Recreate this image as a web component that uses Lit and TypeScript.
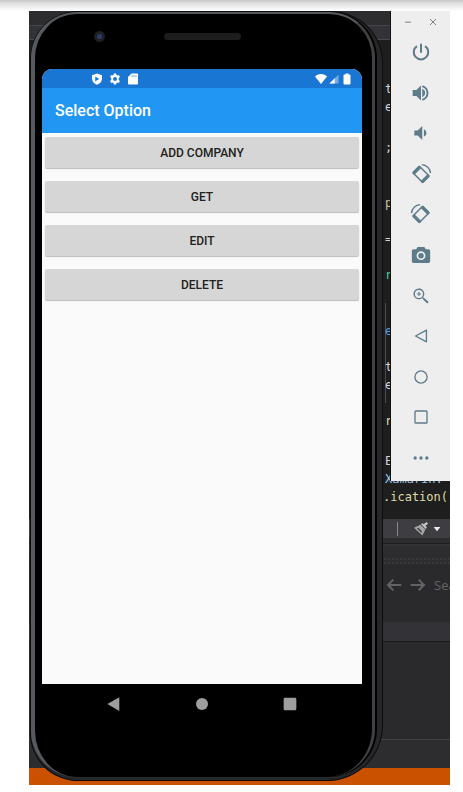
import { LitElement, html, css, svg } from "lit";
import { customElement, property } from "lit/decorators.js";

const ICONS: Record<string, unknown> = {
  power: svg`<path d="M10.800 2h2.400v11h-2.400z"/><path d="M17.600 4l-1.500 1.900A7.500 7.500 0 1 1 7.900 5.900L6.400 4A9.900 9.900 0 1 0 17.600 4z"/>`,
  louder: svg`<path d="M2 8.500v7h4.500L12 21V3L6.500 8.500zM13.500 7v10c2-.8 3.500-2.700 3.500-5s-1.500-4.200-3.500-5z"/><path d="M13.500 2.800v2.300a7.200 7.200 0 0 1 0 13.800v2.300a9.400 9.400 0 0 0 0-18.400z"/>`,
  quieter: svg`<path d="M4 9v6h4l5.500 5.500v-17L8 9zM15.500 7.500v9c1.800-.8 3-2.500 3-4.500s-1.200-3.700-3-4.500z"/>`,
  rotate: svg`<g transform="rotate(-45 12 12.500)"><rect x="6.500" y="4.500" width="11" height="16" rx="1" fill="none" stroke="currentColor" stroke-width="1.800"/><rect x="5.600" y="3.200" width="12.800" height="4" rx="1.500"/><rect x="5.600" y="17.800" width="12.800" height="4" rx="1.500"/></g><path d="M13 .8A11 11 0 0 1 23.400 11" fill="none" stroke="currentColor" stroke-width="1.600"/>`,
  camera: svg`<path fill-rule="evenodd" d="M8 2.500L6.200 5H3a2 2 0 0 0-2 2v12.500a2 2 0 0 0 2 2h18a2 2 0 0 0 2-2V7a2 2 0 0 0-2-2h-3.200L16 2.500zM12 7.500a5.300 5.300 0 1 1 0 10.600 5.300 5.300 0 0 1 0-10.600z"/><circle cx="12" cy="12.800" r="3.300"/>`,
  zoom: svg`<path fill-rule="evenodd" d="M15.500 14h-.8l-.3-.3a6.500 6.500 0 1 0-.7.700l.3.300v.8l5.500 5.500 1.800-1.800zM9.500 4.700a4.800 4.800 0 1 1 0 9.600 4.800 4.800 0 0 1 0-9.600z"/><path d="M8.900 7h1.300v1.900H12v1.300h-1.800V12H8.900v-1.800H7V8.900h1.900z"/>`,
  back: svg`<path fill="none" stroke="currentColor" stroke-width="1.600" stroke-linejoin="round" d="M18.500 5v14L5.500 12z"/>`,
  home: svg`<circle cx="12" cy="12" r="7.300" fill="none" stroke="currentColor" stroke-width="1.600"/>`,
  overview: svg`<rect x="4.800" y="4.800" width="14.400" height="14.400" rx="1" fill="none" stroke="currentColor" stroke-width="1.600"/>`,
  more: svg`<circle cx="5" cy="12" r="2"/><circle cx="12" cy="12" r="2"/><circle cx="19" cy="12" r="2"/>`,
  minimize: svg`<path d="M3 11h18v3H3z"/>`,
  close: svg`<path fill="none" stroke="currentColor" stroke-width="3" d="M3 3l18 18M21 3L3 21"/>`,
  shield: svg`<path fill-rule="evenodd" d="M12 1L2 4.500V11c0 6 4.200 10.500 10 12.500 5.800-2 10-6.500 10-12.500V4.500zM8.500 7l8 4.800-8 4.800z"/>`,
  gear: svg`<path fill-rule="evenodd" d="M9.700 1h4.600l.6 3 1.700 1 3-1 2.300 4-2.400 2.100v3.800l2.400 2.100-2.300 4-3-1-1.700 1-.6 3H9.700l-.6-3-1.700-1-3 1-2.300-4 2.400-2.100v-3.800L2.100 8l2.300-4 3 1 1.700-1zM12 8a4 4 0 1 0 0 8 4 4 0 0 0 0-8z"/>`,
  card: svg`<path d="M9 1h11a2 2 0 0 1 2 2v18a2 2 0 0 1-2 2H4a2 2 0 0 1-2-2V8z"/><path fill="#1976d2" opacity=".6" d="M9 4h2v4H9zM13 4h2v4h-2zM17 4h2v4h-2z"/>`,
  wifi: svg`<path d="M12 22L0 7C3 4 7 2 12 2s9 2 12 5z"/>`,
  signal: svg`<path opacity=".4" d="M1 23L23 1v22z"/><path d="M1 23L14 10v13z"/>`,
  battery: svg`<path d="M9 1h6v2h2a2 2 0 0 1 2 2v16a2 2 0 0 1-2 2H7a2 2 0 0 1-2-2V5a2 2 0 0 1 2-2h2z"/>`,
  navBack: svg`<path d="M20 2v20.500L2 12z"/>`,
  navHome: svg`<circle cx="12" cy="12" r="9"/>`,
  navRecent: svg`<rect x="2.500" y="2.500" width="19" height="19" rx="2"/>`,
  arrowLeft: svg`<path fill="none" stroke="currentColor" stroke-width="3" d="M23 12H3M11 4l-8 8 8 8"/>`,
  arrowRight: svg`<path fill="none" stroke="currentColor" stroke-width="3" d="M1 12h20M13 4l8 8-8 8"/>`,
  broom: svg`<path d="M21.500 0L24 2.500 19.500 7l-3-3z"/><path d="M12 3.500l3-1.500 7 7-2 3z"/><path opacity=".75" d="M11 4.500l8.500 8.500-5 10L0 10z"/><path fill="#3e3e42" d="M5 10.500l7.500 8 1-2.500-6-6z"/>`,
  caret: svg`<path d="M2 6h20L12 19z"/>`,
};

@customElement("ui-icon")
class UiIcon extends LitElement {
  @property() name = "";
  @property({ type: Boolean }) flip = false;

  static styles = css`
    :host { display: block; width: 20px; height: 20px; flex: none; }
    .glyph { display: block; width: 100%; height: 100%; fill: currentColor; overflow: visible; }
    .flip { transform: scaleX(-1); }
  `;

  render() {
    return html`<svg class="glyph ${this.flip ? "flip" : ""}" viewBox="0 0 24 24" aria-hidden="true">${ICONS[this.name]}</svg>`;
  }
}

@customElement("emulator-toolbar")
class EmulatorToolbar extends LitElement {
  static styles = css`
    :host { display: flex; flex-direction: column; width: 59px; height: 470px; box-sizing: border-box; padding-bottom: 3px; background: #eee; color: #5d7b89; box-shadow: -1px 0 0 #111; }
    .window { display: flex; height: 21px; justify-content: space-between; padding: 0 13px; align-items: center; color: #7a858b; }
    .tools { display: flex; flex-direction: column; flex: 1; }
    .tool { flex: 1; justify-content: center; width: 100%; }
    button { display: flex; align-items: center; border: 0; padding: 0; background: none; color: inherit; cursor: pointer; }
    .small { width: 8px; height: 8px; }
  `;

  private tools = [
    { icon: "power", label: "Power" },
    { icon: "louder", label: "Volume up" },
    { icon: "quieter", label: "Volume down" },
    { icon: "rotate", label: "Rotate left" },
    { icon: "rotate", label: "Rotate right", flip: true },
    { icon: "camera", label: "Take screenshot" },
    { icon: "zoom", label: "Zoom" },
    { icon: "back", label: "Back" },
    { icon: "home", label: "Home" },
    { icon: "overview", label: "Overview" },
    { icon: "more", label: "More" },
  ];

  render() {
    return html`
      <div class="window">
        <button aria-label="Minimize"><ui-icon class="small" name="minimize"></ui-icon></button>
        <button aria-label="Close"><ui-icon class="small" name="close"></ui-icon></button>
      </div>
      <div class="tools">
        ${this.tools.map((t) => html`<button class="tool" aria-label=${t.label}>
          <ui-icon name=${t.icon} ?flip=${!!t.flip}></ui-icon>
        </button>`)}
      </div>`;
  }
}

@customElement("phone-frame")
class PhoneFrame extends LitElement {
  static styles = css`
    :host { display: flex; box-sizing: border-box; padding: 1px 8px 4px 1px; background: #262728; border-radius: 48px 52px 56px 48px; box-shadow: inset 0 0 0 1px #0c0c0d; font-family: Roboto, sans-serif; }
    .body { flex: 1; min-width: 0; display: flex; flex-direction: column; box-sizing: border-box; padding: 0 10px 0 7px; background: #000; border: solid; border-width: 2px 3px 0 4px; border-color: #55585b #414144 #000 #56595e; border-radius: 46px 46px 48px 46px; box-shadow: 2px 0 0 #000; }
    .top { display: grid; grid-template-columns: 1fr 77px 1fr; height: 55px; padding-bottom: 10px; box-sizing: border-box; align-items: center; }
    .lens { width: 11px; height: 11px; box-sizing: border-box; margin-left: 52px; border-radius: 50%; border: 3px solid #1d1f24; background: #2c3d66; }
    .speaker { height: 7px; border-radius: 4px; background: #1d1d1e; }
    .screen { flex: 1; display: flex; flex-direction: column; background: #fafafa; border-radius: 10px 10px 0 0; overflow: hidden; }
    .status { display: flex; align-items: center; height: 19px; padding: 0 9px 0 49px; gap: 6px; background: #1976d2; color: #fff; }
    .left, .right { display: flex; align-items: center; }
    .left { gap: 6px; flex: 1; }
    .right { gap: 2px; }
    .status ui-icon { width: 12px; height: 12px; }
    .right .signal { width: 10px; height: 10px; }
    .bar { display: flex; align-items: center; height: 45px; padding: 0 13px; background: #2196f3; color: #fff; }
    .title { margin: 0; font-size: 16px; line-height: 20px; font-weight: 500; }
    .options { display: flex; flex-direction: column; gap: 13px; padding: 4px 3px; }
    .option { height: 31px; border: 0; border-radius: 2px; background: #d6d6d6; color: #212121; font: 500 12px/16px Roboto, sans-serif; box-shadow: 0 1px 1px #bbb; cursor: pointer; }
    .nav { display: flex; justify-content: center; align-items: flex-start; gap: 72px; height: 93px; padding-top: 12px; box-sizing: border-box; color: #9e9e9e; }
    .key { border: 0; padding: 0; background: none; color: inherit; cursor: pointer; }
    .key ui-icon { width: 16px; height: 16px; }
  `;

  render() {
    return html`
      <div class="body">
        <div class="top"><span class="lens"></span><span class="speaker"></span></div>
        <main class="screen">
          <div class="status">
            <div class="left"><ui-icon name="shield"></ui-icon><ui-icon name="gear"></ui-icon><ui-icon name="card"></ui-icon></div>
            <div class="right"><ui-icon name="wifi"></ui-icon><ui-icon class="signal" name="signal"></ui-icon><ui-icon name="battery"></ui-icon></div>
          </div>
          <header class="bar"><h1 class="title">Select Option</h1></header>
          <div class="options">
            ${["ADD COMPANY", "GET", "EDIT", "DELETE"].map((o) => html`<button class="option">${o}</button>`)}
          </div>
        </main>
        <nav class="nav">
          <button class="key" aria-label="Back"><ui-icon name="navBack"></ui-icon></button>
          <button class="key" aria-label="Home"><ui-icon name="navHome"></ui-icon></button>
          <button class="key" aria-label="Recent apps"><ui-icon name="navRecent"></ui-icon></button>
        </nav>
      </div>`;
  }
}

@customElement("ide-backdrop")
class IdeBackdrop extends LitElement {
  static styles = css`
    :host { display: flex; flex-direction: column; overflow: hidden; background: #2d2d30; }
    .side { width: 67px; margin-left: auto; box-sizing: border-box; }
    .tabs { height: 39px; background: linear-gradient(#2d2d30 14px, #46464a 14px, #46464a 15px, #333337 15px, #333337 28px, #4a4a4d 28px, #4a4a4d 29px, #1e1e1e 29px); }
    .editor { flex: 1; background: #1e1e1e; }
    .code { padding-top: 30px; background: linear-gradient(#4a4a4a, #4a4a4a) 2px 253px / 1px 100px no-repeat; font: 12px/18px "DejaVu Sans Mono", monospace; color: #d4d4d4; white-space: pre; overflow: hidden; }
    .line { display: flex; align-items: flex-end; padding-left: 2px; }
    .line:last-child { padding-left: 0; }
    .near { height: 18px; }
    .mid { height: 36px; }
    .far { height: 40px; }
    .block { height: 56px; }
    .peach { color: #d7ba9d; }
    .green { color: #4ec9a0; }
    .blue { color: #569cd6; }
    .pale { color: #9cc4e4; }
    .yellow { color: #dcdcaa; }
    .zoombar { height: 19px; background: #3e3e42; }
    .zoombar .side { display: flex; align-items: center; height: 100%; padding-left: 14px; color: #c8c8c8; }
    .rule { width: 1px; height: 14px; background: #8a8a8d; margin-right: 16px; }
    .broom { width: 14px; height: 14px; margin-right: 5px; }
    .caret { width: 8px; height: 8px; color: #eee; }
    .grip { height: 26px; background: linear-gradient(#2d2d30 5px, #1f1f21 5px, #1f1f21 6px, #333337 6px, #333337 8px, #2d2d30 8px); display: flex; align-items: flex-end; }
    .dots { height: 7px; background: radial-gradient(circle, #39393c 1px, transparent 1px) 0 0 / 4px 4px; }
    .find { height: 58px; background: #2a2a2c; }
    .find .side { display: flex; align-items: center; gap: 8px; height: 42px; padding-left: 3px; color: #636366; font: 13px/18px "Open Sans", sans-serif; overflow: hidden; }
    .find ui-icon { width: 16px; height: 16px; }
    .head { height: 19px; background: #333337; border-bottom: 1px solid #18181a; }
    .list { height: 97px; background: #2a2a2c; border-bottom: 1px solid #424245; }
    .foot { height: 28px; background: #2d2d30; }
    .status { height: 17px; background: #ca5100; }
  `;

  private lines: [string, string, string][] = [
    ["near", "", "t"],
    ["near", "", "e"],
    ["far", "", ";"],
    ["block", "peach", "p"],
    ["mid", "", "="],
    ["mid", "green", "r"],
    ["block", "blue", "e"],
    ["mid", "", "t"],
    ["near", "", "e"],
    ["mid", "yellow", "r"],
    ["far", "", "E"],
    ["near", "pale", "Xamarin."],
    ["near", "yellow", ".ication("],
  ];

  render() {
    return html`
      <div class="tabs"></div>
      <div class="editor"><div class="side code">${this.lines.map(
        ([gap, tone, text]) => html`<div class="line ${gap} ${tone}">${text}</div>`
      )}</div></div>
      <div class="zoombar"><div class="side">
        <span class="rule"></span><ui-icon class="broom" name="broom"></ui-icon><ui-icon class="caret" name="caret"></ui-icon>
      </div></div>
      <div class="grip"><div class="side dots"></div></div>
      <div class="find"><div class="side">
        <ui-icon name="arrowLeft"></ui-icon><ui-icon name="arrowRight"></ui-icon><span>Sea</span>
      </div></div>
      <div class="head"></div>
      <div class="list"></div>
      <div class="foot"></div>
      <div class="status"></div>`;
  }
}

@customElement("app-root")
class AppRoot extends LitElement {
  static styles = css`
    :host { display: block; box-sizing: border-box; min-height: 100vh; padding: 11px 13px 7px 29px; background: linear-gradient(#c6c6c6, #dedede 3px, #fff 11px) #fff; }
    .stage { display: grid; grid-template-columns: minmax(0, 1fr); min-height: calc(100vh - 18px); }
    .backdrop, .front { grid-area: 1 / 1; }
    .front { display: flex; align-items: flex-start; gap: 8px; padding: 0 0 4px 1px; z-index: 1; }
    .phone { flex: 1; min-width: 0; align-self: stretch; }
  `;

  render() {
    return html`
      <div class="stage">
        <ide-backdrop class="backdrop"></ide-backdrop>
        <div class="front">
          <phone-frame class="phone"></phone-frame>
          <emulator-toolbar></emulator-toolbar>
        </div>
      </div>`;
  }
}
